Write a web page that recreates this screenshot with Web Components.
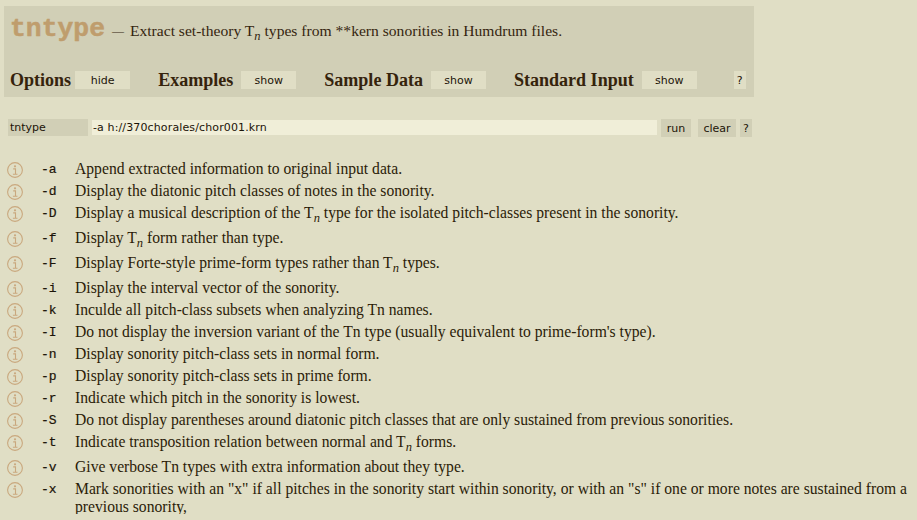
<!DOCTYPE html>
<html><head><meta charset="utf-8"><title>tntype</title>
<style>
html,body{margin:0;padding:0;background:#e0dec5;overflow:hidden}
body{padding:6px 0 0 4px;font-family:"Liberation Serif",serif;color:#2b1c08;height:514px;box-sizing:border-box}
</style></head><body>
<tn-header>
  <span slot="name">tntype</span>
  <span slot="desc">Extract set-theory T<tn-sub>n</tn-sub> types from **kern sonorities in Humdrum files.</span>
  <tn-section label="Options" action="hide" style="--lg:4px;--g:28px"></tn-section>
  <tn-section label="Examples" action="show" style="--lg:8px;--g:28px"></tn-section>
  <tn-section label="Sample Data" action="show" style="--lg:8px;--g:28px"></tn-section>
  <tn-section label="Standard Input" action="show" style="--lg:8px;--g:37px"></tn-section>
  <tn-btn compact>?</tn-btn>
</tn-header>
<tn-command></tn-command>
<tn-options>
  <tn-opt flag="a">Append extracted information to original input data.</tn-opt>
  <tn-opt flag="d">Display the diatonic pitch classes of notes in the sonority.</tn-opt>
  <tn-opt flag="D" tall>Display a musical description of the T<tn-sub>n</tn-sub> type for the isolated pitch-classes present in the sonority.</tn-opt>
  <tn-opt flag="f" tall>Display T<tn-sub>n</tn-sub> form rather than type.</tn-opt>
  <tn-opt flag="F" tall>Display Forte-style prime-form types rather than T<tn-sub>n</tn-sub> types.</tn-opt>
  <tn-opt flag="i">Display the interval vector of the sonority.</tn-opt>
  <tn-opt flag="k">Inculde all pitch-class subsets when analyzing Tn names.</tn-opt>
  <tn-opt flag="I">Do not display the inversion variant of the Tn type (usually equivalent to prime-form's type).</tn-opt>
  <tn-opt flag="n">Display sonority pitch-class sets in normal form.</tn-opt>
  <tn-opt flag="p">Display sonority pitch-class sets in prime form.</tn-opt>
  <tn-opt flag="r">Indicate which pitch in the sonority is lowest.</tn-opt>
  <tn-opt flag="S">Do not display parentheses around diatonic pitch classes that are only sustained from previous sonorities.</tn-opt>
  <tn-opt flag="t" tall>Indicate transposition relation between normal and T<tn-sub>n</tn-sub> forms.</tn-opt>
  <tn-opt flag="v">Give verbose Tn types with extra information about they type.</tn-opt>
  <tn-opt flag="x">Mark sonorities with an "x" if all pitches in the sonority start within sonority, or with an "s" if one or more notes are sustained from a previous sonority,</tn-opt>
</tn-options>
<script>
function def(name, css, html){
  customElements.define(name, class extends HTMLElement{
    connectedCallback(){
      if(this.shadowRoot) return;
      const r=this.attachShadow({mode:"open"});
      r.innerHTML="<style>"+css+"</style>"+(typeof html==="function"?html(this):html);
    }
  });
}
def("tn-btn",`:host{display:inline-flex;align-items:center;justify-content:center;height:18px;width:55px;flex:none;background:#e0dec5;color:#1c1408;font:11px "DejaVu Sans",sans-serif}
:host([compact]){width:12px}`,`<slot></slot>`);
def("tn-sub",`:host{display:inline;font-style:italic;font-size:12.5px;position:relative;top:4px}`,`<slot></slot>`);
def("tn-section",`:host{display:inline-flex;align-items:center;gap:var(--lg);margin-right:var(--g);flex:none}
b{font:bold 18.05px "Liberation Serif",serif;color:#35230c;white-space:nowrap}`,
 e=>`<b>${e.getAttribute("label")}</b><tn-btn>${e.getAttribute("action")}</tn-btn>`);
def("tn-header",`:host{display:block;box-sizing:border-box;width:750px;height:91px;background:#d1cfb6}
.top{display:flex;align-items:baseline;height:56px;padding:7px 0 0 6px;box-sizing:border-box}
.name{font:bold 26.4px "Liberation Mono",monospace;color:#bf9d6d;line-height:32px;-webkit-text-stroke:.5px #bf9d6d}
.desc{font:15.6px "Liberation Serif",serif;margin-left:7px;color:#35250f;white-space:nowrap}
.dash{font-size:12px;vertical-align:1px;margin-right:2px}
.row{display:flex;align-items:center;padding-left:6px;height:18px;margin-top:9px}`,
`<div class="top"><span class="name"><slot name="name"></slot></span><span class="desc"><span class="dash">&mdash;</span> <slot name="desc"></slot></span></div><div class="row"><slot></slot></div>`);
def("tn-command",`:host{display:flex;align-items:flex-start;margin:22px 0 0 4px;height:18px;font:11px "DejaVu Sans",sans-serif;color:#1c1408}
.n{width:80px;height:17px;background:#d1cfb6;padding-left:2px;box-sizing:border-box;line-height:18px}
.i{width:565px;height:15px;background:#f0eed8;margin:1px 0 0 4px;padding-left:1px;box-sizing:border-box;line-height:16px;letter-spacing:.13px}
tn-btn{background:#d1cfb6}
.run{width:30px;margin-left:4px}.clear{width:38px;margin-left:7px}.q{width:12px;margin-left:4px}`,
`<div class="n">tntype</div><div class="i">-a h://370chorales/chor001.krn</div><tn-btn class="run">run</tn-btn><tn-btn class="clear">clear</tn-btn><tn-btn class="q">?</tn-btn>`);
def("tn-options",`:host{display:block;margin-top:23px;margin-left:-4px}`,`<slot></slot>`);
def("tn-opt",`:host{display:grid;grid-template-columns:41px 34px 1fr;min-height:22px;font:15.65px/18px "Liberation Serif",serif;color:#2b1c08;align-items:start}
:host([tall]){min-height:25px}
svg{display:block;margin:2px 0 0 7px}
code{font:13px/18px "Liberation Mono",monospace;color:#1c1408;padding-top:1px;-webkit-text-stroke:.2px #1c1408}
.d{padding-right:2px}`,
e=>`<svg width="16" height="16" viewBox="0 0 16 16"><circle cx="8" cy="8" r="7.4" fill="none" stroke="#c9a87e" stroke-width="1.1"/><circle cx="8" cy="4.3" r="1.1" fill="#c9a87e"/><path d="M6.2 6.9h2.3v5.2M5.9 12.2h4.6" fill="none" stroke="#c9a87e" stroke-width="1.1"/></svg><code>-${e.getAttribute("flag")}</code><div class="d"><slot></slot></div>`);
</script>
</body></html>
